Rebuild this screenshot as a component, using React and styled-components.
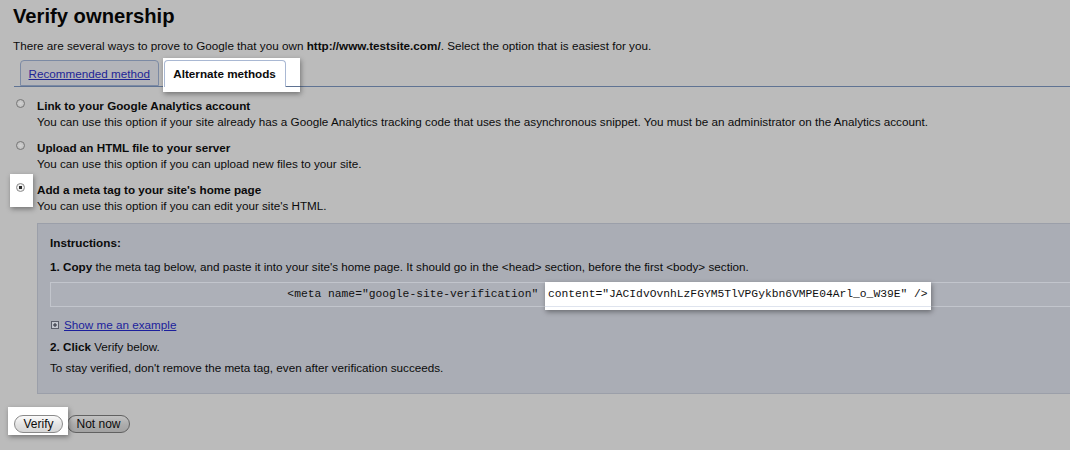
import React from "react";
import styled, { createGlobalStyle } from "styled-components";

const Global = createGlobalStyle`
  html, body { margin: 0; padding: 0; background: #bbbbbb; overflow: hidden; }
  body {
    font-family: "Liberation Sans", Arial, Helvetica, sans-serif;
    font-size: 11.7px;
    color: #0b0b0b;
  }
`;

const Page = styled.div`
  padding: 4px 13px 0;
  width: 1070px;
  height: 450px;
  box-sizing: border-box;
  overflow: hidden;
`;

const Title = styled.h1`
  margin: 0;
  font-size: 20.2px;
  line-height: 24px;
  font-weight: bold;
  color: #050505;
`;

const Intro = styled.p`
  margin: 10px 0 0;
  line-height: 16px;
`;

const TabRow = styled.div`
  display: flex;
  align-items: flex-end;
  height: 26px;
  margin: 6px -13px 0 1px;
  padding-left: 6px;
  border-bottom: 1px solid #5f7393;
`;

const Tab = styled.div`
  box-sizing: border-box;
  height: ${(p) => (p.$active ? 27 : 26)}px;
  padding: 0 ${(p) => (p.$active ? 8.75 : 7.5)}px;
  line-height: 25px;
  border: 1px solid ${(p) => (p.$active ? "#a9b8d3" : "#7c8aa4")};
  border-bottom: ${(p) => (p.$active ? "none" : "1px solid #7c8aa4")};
  border-radius: 4px 4px 0 0;
  background: ${(p) => (p.$active ? "#ffffff" : "#b3b4b9")};
  font-weight: ${(p) => (p.$active ? "bold" : "normal")};
  white-space: nowrap;
`;

const TabLink = styled.a`
  color: #1e2596;
  text-decoration: underline;
  cursor: pointer;
`;

const TabSpot = styled.div`
  position: relative;
  z-index: 1;
  display: flex;
  align-items: flex-end;
  margin: 0 0 -6px 4px;
  padding: 2px 0 5px 1px;
  background: #ffffff;
  box-shadow: 1px 2px 5px rgba(0, 0, 0, 0.38);
`;

const TabTail = styled.span`
  width: 14px;
  height: 0;
  border-bottom: 1px solid #5f7393;
`;

const Options = styled.div`
  padding-top: 10px;
`;

const Option = styled.div`
  display: grid;
  grid-template-columns: 24px 1fr;
  & + & {
    margin-top: 9px;
  }
`;

const RadioCell = styled.div`
  padding: 2px 0 0 3px;
`;

const Radio = styled.span`
  display: block;
  box-sizing: border-box;
  width: 9px;
  height: 9px;
  border-radius: 50%;
  border: 1px solid ${(p) => (p.$checked ? "#8d8d8d" : "#767676")};
  background: ${(p) =>
    p.$checked
      ? "radial-gradient(circle, #2a2a2a 0 1.6px, #f4f4f4 2px, #dcdcdc 100%)"
      : "radial-gradient(circle, #d2d2d2 0, #b8b8b8 100%)"};
`;

const RadioSpot = styled.div`
  position: relative;
  z-index: 1;
  width: fit-content;
  padding: 9px 8px 15px 6px;
  margin: -9px -8px -15px -6px;
  background: #ffffff;
  box-shadow: 1px 2px 5px rgba(0, 0, 0, 0.38);
`;

const OptTitle = styled.div`
  font-weight: bold;
  line-height: 17px;
`;

const OptDesc = styled.div`
  line-height: 16px;
`;

const Panel = styled.div`
  margin-top: 9px;
  width: 1144px;
  box-sizing: border-box;
  background: #aaadb5;
  border: 1px solid #9b9fa9;
  padding: 11px 12px 17px;
  line-height: 16px;
`;

const Line = styled.div`
  margin-top: ${(p) => p.$gap || 0}px;
  font-weight: ${(p) => (p.$bold ? "bold" : "normal")};
`;

const CodeBox = styled.div`
  display: flex;
  justify-content: center;
  align-items: flex-start;
  margin-top: 7px;
  height: 23px;
  border: 1px solid #c2c5cc;
  background: #adb0b8;
  font-family: "Liberation Mono", "Courier New", monospace;
  font-size: 11.3px;
  color: #111;
  white-space: pre;
`;

const CodePart = styled.span`
  line-height: 23px;
`;

const CodeSpot = styled.span`
  position: relative;
  z-index: 1;
  margin-top: -1px;
  height: 28px;
  line-height: 25px;
  padding: 0 3px;
  background: linear-gradient(to bottom, #fff 24px, #dfe4ee 24px, #dfe4ee 25px, #fff 25px);
  box-shadow: 1px 2px 5px rgba(0, 0, 0, 0.38);
`;

const ShowRow = styled.div`
  display: flex;
  align-items: center;
  gap: 5px;
  margin-top: 10px;
  padding-left: 1px;
`;

const Link = styled.a`
  color: #1c1f9c;
  text-decoration: underline;
  cursor: pointer;
`;

const ButtonRow = styled.div`
  display: flex;
  align-items: flex-start;
  gap: 4px;
  margin-top: 21px;
  padding-left: 1px;
`;

const ButtonSpot = styled.div`
  position: relative;
  z-index: 1;
  padding: 8px 5px 2px 6px;
  margin: -8px -5px -2px -6px;
  background: #ffffff;
  box-shadow: 1px 2px 5px rgba(0, 0, 0, 0.38);
`;

const Button = styled.button`
  display: block;
  box-sizing: border-box;
  height: 18px;
  padding: 0 8.5px;
  border: 1px solid ${(p) => (p.$lit ? "#8a8a8a" : "#616161")};
  border-radius: 9px;
  font-family: "Liberation Sans", Arial, sans-serif;
  font-size: 12px;
  line-height: 16px;
  color: #0b0b0b;
  background: ${(p) =>
    p.$lit
      ? "linear-gradient(to bottom, #fbfbfb, #e2e2e2 55%, #d6d6d6)"
      : "linear-gradient(to bottom, #c2c2c2, #acacac 55%, #a2a2a2)"};
`;

const PlusBox = () => (
  <svg width="8" height="8" viewBox="0 0 8 8">
    <rect x="0.5" y="0.5" width="7" height="7" fill="#c4c7cf" stroke="#5b5e6a" />
    <path d="M2 4h4M4 2v4" stroke="#2a2c38" strokeWidth="1" />
  </svg>
);

export default function App() {
  return (
    <Page>
      <Global />
      <Title>Verify ownership</Title>
      <Intro>
        There are several ways to prove to Google that you own <b>http://www.testsite.com/</b>. Select the
        option that is easiest for you.
      </Intro>
      <TabRow>
        <Tab>
          <TabLink>Recommended method</TabLink>
        </Tab>
        <TabSpot>
          <Tab $active>Alternate methods</Tab>
          <TabTail />
        </TabSpot>
      </TabRow>

      <Options>
        <Option>
          <RadioCell>
            <Radio />
          </RadioCell>
          <div>
            <OptTitle>Link to your Google Analytics account</OptTitle>
            <OptDesc>
              You can use this option if your site already has a Google Analytics tracking code that uses the
              asynchronous snippet. You must be an administrator on the Analytics account.
            </OptDesc>
          </div>
        </Option>
        <Option>
          <RadioCell>
            <Radio />
          </RadioCell>
          <div>
            <OptTitle>Upload an HTML file to your server</OptTitle>
            <OptDesc>You can use this option if you can upload new files to your site.</OptDesc>
          </div>
        </Option>
        <Option>
          <RadioCell>
            <RadioSpot>
              <Radio $checked />
            </RadioSpot>
          </RadioCell>
          <div>
            <OptTitle>Add a meta tag to your site's home page</OptTitle>
            <OptDesc>You can use this option if you can edit your site's HTML.</OptDesc>
            <Panel>
              <Line $bold>Instructions:</Line>
              <Line $gap={8}>
                <b>1. Copy</b> the meta tag below, and paste it into your site's home page. It should go in the
                &lt;head&gt; section, before the first &lt;body&gt; section.
              </Line>
              <CodeBox>
                <CodePart>{'<meta name="google-site-verification" '}</CodePart>
                <CodeSpot>{'content="JACIdvOvnhLzFGYM5TlVPGykbn6VMPE04Arl_o_W39E" />'}</CodeSpot>
              </CodeBox>
              <ShowRow>
                <PlusBox />
                <Link>Show me an example</Link>
              </ShowRow>
              <Line $gap={6}>
                <b>2. Click</b> Verify below.
              </Line>
              <Line $gap={5}>To stay verified, don't remove the meta tag, even after verification succeeds.</Line>
            </Panel>
          </div>
        </Option>
      </Options>

      <ButtonRow>
        <ButtonSpot>
          <Button $lit>Verify</Button>
        </ButtonSpot>
        <Button>Not now</Button>
      </ButtonRow>
    </Page>
  );
}
